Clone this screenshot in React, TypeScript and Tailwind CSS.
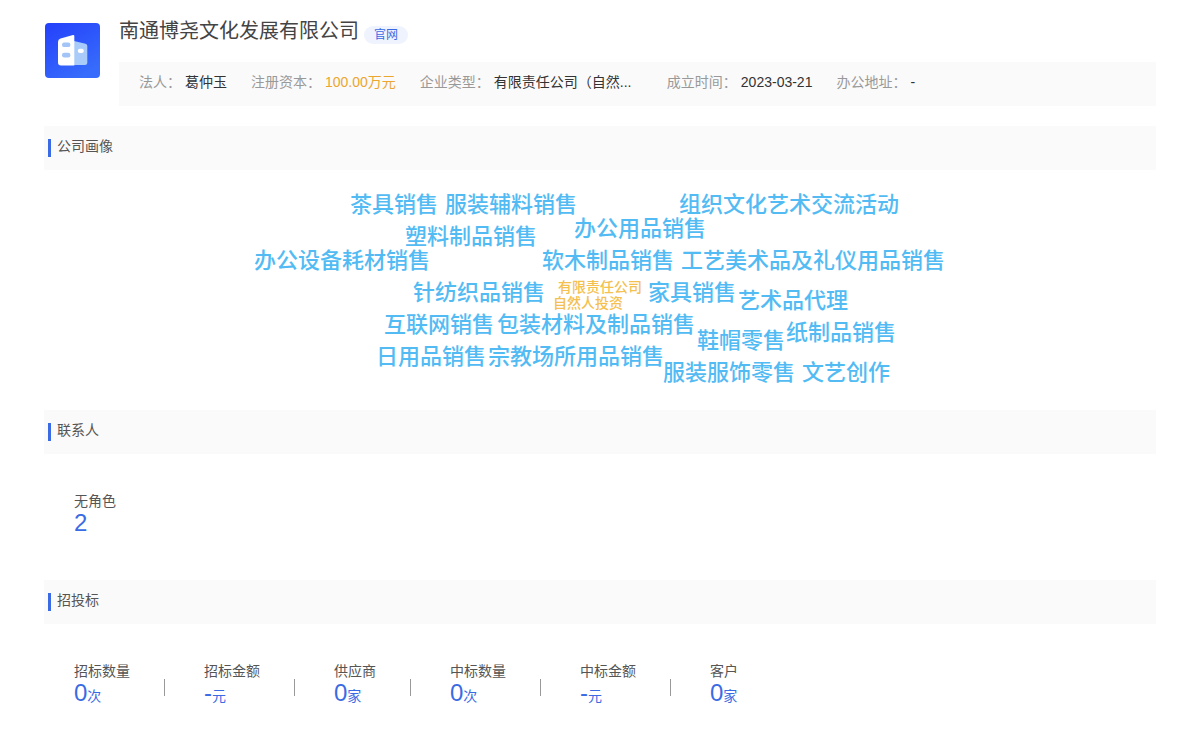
import React from "react";

const details = [
  { label: "法人：", value: "葛仲玉" },
  { label: "注册资本：", value: "100.00万元", className: "text-[#eba62f]" },
  { label: "企业类型：", value: "有限责任公司（自然...", className: "w-[149px] whitespace-nowrap text-[#333]" },
  { label: "成立时间：", value: "2023-03-21" },
  { label: "办公地址：", value: "-" },
];

const words = [
  { text: "茶具销售", className: "left-[100px] top-[19px]" },
  { text: "服装辅料销售", className: "left-[195px] top-[19px]" },
  { text: "组织文化艺术交流活动", className: "left-[429px] top-[19px]" },
  { text: "办公用品销售", className: "left-[324px] top-[43px]" },
  { text: "塑料制品销售", className: "left-[155px] top-[51px]" },
  { text: "办公设备耗材销售", className: "left-[4px] top-[75px]" },
  { text: "软木制品销售", className: "left-[292px] top-[75px]" },
  { text: "工艺美术品及礼仪用品销售", className: "left-[431px] top-[75px]" },
  { text: "针纺织品销售", className: "left-[163px] top-[107px]" },
  { text: "家具销售", className: "left-[398px] top-[107px]" },
  { text: "艺术品代理", className: "left-[488px] top-[115px]" },
  { text: "互联网销售", className: "left-[134px] top-[139px]" },
  { text: "包装材料及制品销售", className: "left-[247px] top-[139px]" },
  { text: "纸制品销售", className: "left-[536px] top-[147px]" },
  { text: "鞋帽零售", className: "left-[447px] top-[155px]" },
  { text: "日用品销售", className: "left-[126px] top-[171px]" },
  { text: "宗教场所用品销售", className: "left-[238px] top-[171px]" },
  { text: "服装服饰零售", className: "left-[413px] top-[187px]" },
  { text: "文艺创作", className: "left-[552px] top-[187px]" },
];

const tags = [
  { text: "有限责任公司", className: "left-[308px] top-[109px]" },
  { text: "自然人投资", className: "left-[303px] top-[125px]" },
];

const bids = [
  { label: "招标数量", value: "0", unit: "次" },
  { label: "招标金额", value: "-", unit: "元" },
  { label: "供应商", value: "0", unit: "家" },
  { label: "中标数量", value: "0", unit: "次" },
  { label: "中标金额", value: "-", unit: "元" },
  { label: "客户", value: "0", unit: "家" },
];

const CompanyLogo = () => (
  <svg viewBox="0 0 55 55" className="mt-[23px] ml-px size-[55px] shrink-0" aria-hidden="true">
    <defs>
      <linearGradient id="logo-bg" x1="0" y1="0" x2="0.6" y2="1">
        <stop offset="0" stopColor="#2440fb" />
        <stop offset="1" stopColor="#366bfb" />
      </linearGradient>
    </defs>
    <rect width="55" height="55" rx="4" fill="url(#logo-bg)" />
    <path d="M29 18 40.5 20.8Q42.3 21.4 42.3 23V39.5Q42.3 42 39.8 42H29Z" fill="#a9cbfa" />
    <path d="M13 19Q13 16.2 15.5 15.4L28 12Q29.3 11.8 29.3 13V42.5H16Q13 42.5 13 39.5Z" fill="#fff" />
    <rect x="17" y="19.5" width="8.4" height="4.6" rx="2.2" fill="#a3c4f7" />
    <rect x="17" y="29.8" width="8.4" height="4.6" rx="2.2" fill="#a3c4f7" />
    <rect x="32.8" y="25.8" width="6" height="4.2" rx="2" fill="#fff" />
  </svg>
);

const SectionTitle = ({ children }: { children: React.ReactNode }) => (
  <div className="flex h-11 items-center bg-[#fafafa] pl-1">
    <h2 className="flex items-center gap-1.5 text-sm">
      <span className="h-[18px] w-[3px] bg-[#3a6be4]" />
      <span className="-mt-1">{children}</span>
    </h2>
  </div>
);

const Stat = ({ label, value, unit }: { label: string; value: string; unit?: string }) => (
  <div>
    <p className="text-sm leading-5">{label}</p>
    <p className="text-sm leading-6 text-[#3a6be4]">
      <span className="text-2xl leading-6">{value}</span>
      {unit}
    </p>
  </div>
);

const App = () => {
  return (
    <main
      lang="zh-CN"
      className="min-h-screen bg-white px-11 pb-10 font-['Liberation_Sans','Noto_Sans_CJK_SC',sans-serif] text-[#555]"
    >
      <header className="flex gap-[19px]">
        <CompanyLogo />
        <div className="min-w-0 flex-1 pt-4">
          <div className="flex h-[46px] items-start gap-[5px]">
            <h1 className="text-xl leading-[30px] text-[#444]">南通博尧文化发展有限公司</h1>
            <a
              href="#"
              className="mt-2.5 rounded-full bg-[#eff3fe] px-2.5 text-xs leading-[18px] text-[#3a6be4]"
            >
              官网
            </a>
          </div>
          <dl className="flex min-h-11 flex-wrap items-center gap-x-6 bg-[#fafafa] px-5 pb-1 text-sm">
            {details.map(({ label, value, className }) => (
              <div key={label} className="flex gap-1">
                <dt className="text-[#999]">{label}</dt>
                <dd className={className ?? "text-[#333]"}>{value}</dd>
              </div>
            ))}
          </dl>
        </div>
      </header>

      <section className="mt-5">
        <SectionTitle>公司画像</SectionTitle>
        <div className="relative mx-auto h-60 w-[700px]">
          {words.map(({ text, className }) => (
            <span
              key={text}
              className={`absolute text-[22px] leading-8 font-medium whitespace-nowrap text-[#53bbf3] ${className}`}
            >
              {text}
            </span>
          ))}
          {tags.map(({ text, className }) => (
            <span
              key={text}
              className={`absolute text-sm leading-4 font-medium whitespace-nowrap text-[#f4c050] ${className}`}
            >
              {text}
            </span>
          ))}
        </div>
      </section>

      <section>
        <SectionTitle>联系人</SectionTitle>
        <div className="px-[30px] pt-[37px] pb-[42px]">
          <Stat label="无角色" value="2" />
        </div>
      </section>

      <section>
        <SectionTitle>招投标</SectionTitle>
        <div className="flex flex-wrap px-[30px] pt-[37px]">
          {bids.map((bid, i) => (
            <div key={bid.label} className="flex">
              {i > 0 && <span className="mt-[18px] mr-[39px] ml-[34px] h-[17px] w-px bg-[#999]" />}
              <Stat {...bid} />
            </div>
          ))}
        </div>
      </section>
    </main>
  );
};

export default App;
